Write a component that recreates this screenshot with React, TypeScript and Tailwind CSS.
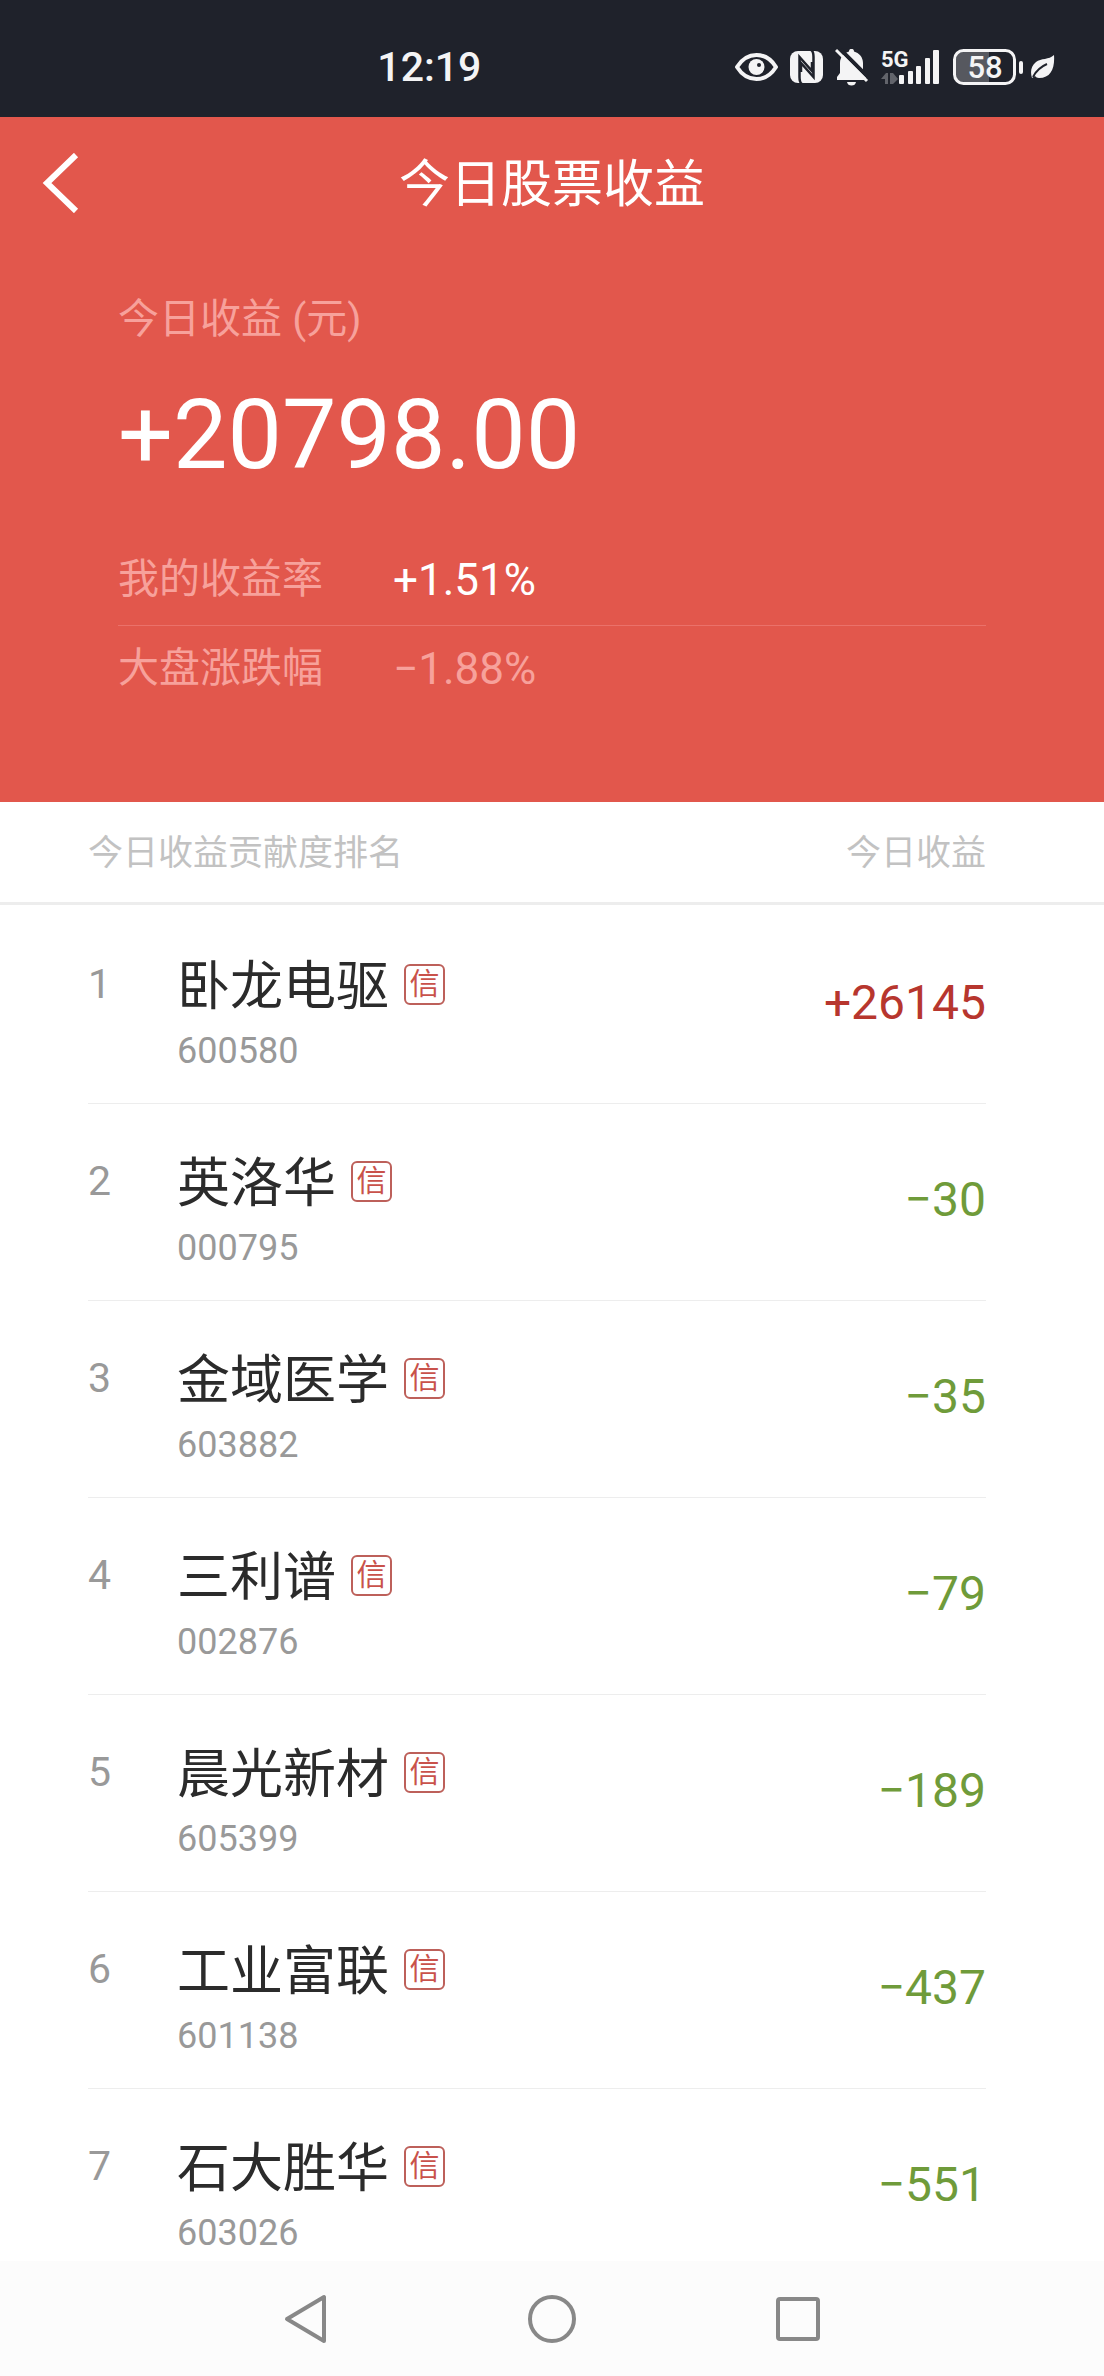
type Stock = {
  name: string;
  code: string;
  profit: number;
};

const stocks: Stock[] = [
  { name: "卧龙电驱", code: "600580", profit: 26145 },
  { name: "英洛华", code: "000795", profit: -30 },
  { name: "金域医学", code: "603882", profit: -35 },
  { name: "三利谱", code: "002876", profit: -79 },
  { name: "晨光新材", code: "605399", profit: -189 },
  { name: "工业富联", code: "601138", profit: -437 },
  { name: "石大胜华", code: "603026", profit: -551 },
];

function formatProfit(value: number) {
  return value < 0 ? `−${Math.abs(value)}` : `+${value}`;
}

function EyeIcon() {
  return (
    <svg width="43" height="36" viewBox="0 0 43 36" fill="none">
      <path
        d="M2 18C7 10 14 6 21.500 6S36 10 41 18C36 26 29 30 21.500 30S7 26 2 18Z"
        stroke="#f4f4f5"
        strokeWidth="4"
        strokeLinejoin="round"
      />
      <circle cx="21.500" cy="18" r="8" fill="#f4f4f5" />
      <circle cx="24" cy="16" r="2" fill="#1f222b" />
    </svg>
  );
}

function NfcIcon() {
  return (
    <svg width="33" height="36" viewBox="0 0 33 36" fill="none">
      <rect x="0" y="2" width="33" height="32" rx="8" fill="#f4f4f5" />
      <path d="M12 35C10 34 9.500 31 9.500 28V8L22 22V13" stroke="#1f222b" strokeWidth="2.500" />
      <path d="M21 1C23 2 23.500 5 23.500 8V28L11 14V23" stroke="#1f222b" strokeWidth="2.500" />
    </svg>
  );
}

function BellOffIcon() {
  return (
    <svg width="34" height="38" viewBox="0 0 34 38" fill="none">
      <path
        d="M14 3.500C14 1.500 15 1 16.500 1S19 1.500 19 3.500C24 5 28 9 28 15V23L31 28V32H2V29L5 25V15C5 9 9 5 14 3.500Z"
        fill="#f4f4f5"
      />
      <path d="M12 34H21C20.500 36.500 19 37.500 16.500 37.500S12.500 36.500 12 34Z" fill="#f4f4f5" />
      <path d="M4 0L35 31" stroke="#1f222b" strokeWidth="4" />
      <path d="M1 2L32 33" stroke="#f4f4f5" strokeWidth="3" />
    </svg>
  );
}

function SignalIcon() {
  return (
    <svg width="60" height="52" viewBox="0 -8 60 52" fill="#f4f4f5">
      <text x="0" y="18" fontSize="22" fontWeight="700">
        5G
      </text>
      <path d="M0 30L5 24H7V35H4V30Z M9 24H12L17 30L12 35H9Z" fill="#62646b" />
      <rect x="18" y="26" width="5" height="9" rx="1" />
      <rect x="27" y="22" width="5" height="13" rx="1" />
      <rect x="35" y="17" width="5" height="18" rx="1" />
      <rect x="44" y="9" width="5" height="26" rx="1" />
      <rect x="52" y="1" width="6" height="34" rx="1" />
    </svg>
  );
}

function BatteryIcon() {
  return (
    <svg width="70" height="36" viewBox="0 0 70 36" fill="none">
      <path d="M36 3H11C6 3 3 6 3 11V25C3 30 6 33 11 33H36Z" fill="#56585f" />
      <rect x="1.500" y="1.500" width="60" height="33" rx="9" stroke="#f4f4f5" strokeWidth="3" />
      <rect x="66" y="12" width="4" height="13" rx="2" fill="#f4f4f5" />
      <text x="32" y="29" fontSize="31" fontWeight="500" textAnchor="middle" fill="#f4f4f5">
        58
      </text>
    </svg>
  );
}

function LeafIcon() {
  return (
    <svg width="24" height="24" viewBox="0 0 24 24" fill="none">
      <path d="M23 0C24 13 20 23 8 23C6 23 5 22 4 21L1 23C-1 17 0 11 5 7C10 3 18 5 23 0Z" fill="#f4f4f5" />
      <path d="M2 22C5 16 9 12 16 9" stroke="#1f222b" strokeWidth="2" />
    </svg>
  );
}

function StatusBar() {
  return (
    <div className="flex h-[117px] shrink-0 items-center justify-between bg-[#1f222b] pt-4 pl-[34%] pr-[49px] text-[#f4f4f5]">
      <span className="pt-0.5 pl-0.5 text-[41px] font-medium">12:19</span>
      <div className="flex items-center gap-3">
        <EyeIcon />
        <NfcIcon />
        <BellOffIcon />
        <SignalIcon />
        <div className="flex items-center gap-2">
          <BatteryIcon />
          <LeafIcon />
        </div>
      </div>
    </div>
  );
}

function Summary() {
  return (
    <header className="shrink-0 bg-[#e2574c] pb-[92px] text-white">
      <div className="grid h-[132px] grid-cols-[1fr_auto_1fr] items-center">
        <button aria-label="返回" className="w-fit pl-[42px]">
          <svg width="38" height="60" viewBox="0 0 38 60" fill="none">
            <path d="M34 2L5 30L34 58" stroke="currentColor" strokeWidth="6" />
          </svg>
        </button>
        <h1 className="pt-1 text-[51px] leading-[60px]">今日股票收益</h1>
      </div>
      <div className="px-[118px]">
        <p className="mt-10 text-[41px] leading-[60px] text-[#f7a19b]">今日收益 (元)</p>
        <p className="mt-[30px] text-[97px] leading-[112px]">+20798.00</p>
        <dl className="mt-10 text-[41px]">
          <div className="flex h-[95px] items-center border-b border-[#eb716a] pt-1">
            <dt className="w-[275px] text-[#f7a19b]">我的收益率</dt>
            <dd className="text-[44px]">+1.51%</dd>
          </div>
          <div className="flex h-[84px] items-center pt-0.5 text-[#f7a19b]">
            <dt className="w-[275px]">大盘涨跌幅</dt>
            <dd className="text-[44px]">−1.88%</dd>
          </div>
        </dl>
      </div>
    </header>
  );
}

function StockRow({ stock, rank }: { stock: Stock; rank: number }) {
  return (
    <tr>
      <td className="p-0 pl-22">
        <div className="flex h-[197px] border-b border-[#ededed] pt-[45px]">
          <span className="w-[89px] text-[41px] leading-[64px] text-[#999999]">{rank}</span>
          <div>
            <div className="flex h-16 items-center gap-[15px]">
              <span className="pt-1.5 text-[53px] leading-[64px] text-[#2b2b2b]">{stock.name}</span>
              <span className="flex size-[41px] items-center justify-center rounded-md border-2 border-[#bd605a] text-[30px] leading-none text-[#c9524b]">
                信
              </span>
            </div>
            <div className="text-[36px] leading-[70px] text-[#999999]">{stock.code}</div>
          </div>
        </div>
      </td>
      <td className="p-0 pr-[118px]">
        <div
          className={`flex h-[197px] items-center justify-end border-b border-[#ededed] pb-1 text-[48px] ${
            stock.profit < 0 ? "text-[#6f9b3a]" : "text-[#b7362e]"
          }`}
        >
          {formatProfit(stock.profit)}
        </div>
      </td>
    </tr>
  );
}

function Ranking() {
  return (
    <main className="min-h-0 flex-1 overflow-y-auto [scrollbar-width:none]">
      <table className="w-full border-separate border-spacing-0">
        <thead className="text-[35px] text-[#c2c2c2]">
          <tr className="h-[103px]">
            <th className="border-b-3 border-[#ededed] pt-1 pl-22 text-left font-normal">今日收益贡献度排名</th>
            <th className="border-b-3 border-[#ededed] pt-1 pr-[118px] text-right font-normal">今日收益</th>
          </tr>
        </thead>
        <tbody className="before:block before:h-0.5">
          {stocks.map((stock, i) => (
            <StockRow key={stock.code} stock={stock} rank={i + 1} />
          ))}
        </tbody>
      </table>
    </main>
  );
}

function SystemNav() {
  return (
    <nav className="grid h-[115px] shrink-0 grid-cols-3 items-center justify-items-center bg-[#fcfcfc] px-[16.6%] text-[#888888]">
      <button aria-label="后退">
        <svg width="50" height="50" viewBox="0 0 50 50" fill="none" stroke="currentColor" strokeWidth="4">
          <path d="M43 3V47L6 25Z" strokeLinejoin="round" />
        </svg>
      </button>
      <button aria-label="主屏幕">
        <svg width="50" height="50" viewBox="0 0 50 50" fill="none" stroke="currentColor" strokeWidth="4">
          <circle cx="25" cy="25" r="22" />
        </svg>
      </button>
      <button aria-label="最近任务">
        <svg width="50" height="50" viewBox="0 0 50 50" fill="none" stroke="currentColor" strokeWidth="4">
          <rect x="5" y="5" width="40" height="40" rx="2" />
        </svg>
      </button>
    </nav>
  );
}

export default function App() {
  return (
    <div className="flex h-screen flex-col bg-white font-[Roboto,'Noto_Sans_CJK_SC',sans-serif]">
      <StatusBar />
      <Summary />
      <Ranking />
      <SystemNav />
    </div>
  );
}
